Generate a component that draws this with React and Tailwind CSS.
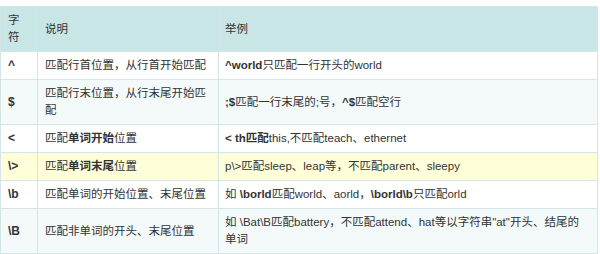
const rows = [
  {
    ch: '^',
    desc: <>匹配行首位置，从行首开始匹配</>,
    ex: <><b>^world</b>只匹配一行开头的world</>,
    bg: 'bg-white',
  },
  {
    ch: '$',
    desc: <>匹配行末位置，从行末尾开始匹配</>,
    ex: <><b>;$</b>匹配一行末尾的;号，<b>^$</b>匹配空行</>,
    bg: 'bg-[#f4fafa]',
  },
  {
    ch: '<',
    desc: <>匹配<b>单词开始</b>位置</>,
    ex: <><b>&lt; th匹配</b>this,不匹配teach、ethernet</>,
    bg: 'bg-white',
  },
  {
    ch: '\\>',
    desc: <>匹配<b>单词末尾</b>位置</>,
    ex: <>p\&gt;匹配sleep、leap等，不匹配parent、sleepy</>,
    bg: 'bg-[#ffffd9]',
  },
  {
    ch: '\\b',
    desc: <>匹配单词的开始位置、末尾位置</>,
    ex: <>如 <b>\borld</b>匹配world、aorld，<b>\borld\b</b>只匹配orld</>,
    bg: 'bg-white',
  },
  {
    ch: '\\B',
    desc: <>匹配非单词的开头、末尾位置</>,
    ex: <>如 \Bat\B匹配battery，不匹配attend、hat等以字符串"at"开头、结尾的<span className="whitespace-nowrap">单词</span></>,
    bg: 'bg-[#f4fafa]',
  },
];

export default function App() {
  return (
    <div className="w-[600px] h-[254px] bg-white pt-[6px] text-[#333] text-[11.5px] leading-[17px]" style={{ fontFamily: '"Liberation Sans", "Noto Sans CJK SC", sans-serif' }}>
      <table className="w-[597px] table-fixed border-collapse border border-[#d4e6e6]">
        <colgroup>
          <col className="w-[37px]" />
          <col className="w-[181px]" />
          <col className="w-[379px]" />
        </colgroup>
        <thead>
          <tr className="bg-[#c9e6e7]">
            <th className="border border-[#d4e6e6] px-[7px] py-[5px] text-left font-normal">字符</th>
            <th className="border border-[#d4e6e6] px-[7px] py-[5px] text-left font-normal">说明</th>
            <th className="border border-[#d4e6e6] px-[6px] py-[5px] text-left font-normal">举例</th>
          </tr>
        </thead>
        <tbody>
          {rows.map((r, i) => (
            <tr key={i} className={r.bg}>
              <td className="border border-[#d4e6e6] px-[7px] py-[5px] text-[12px] font-bold align-middle">{r.ch}</td>
              <td className="border border-[#d4e6e6] px-[7px] py-[5px] align-middle">{r.desc}</td>
              <td className="border border-[#d4e6e6] px-[6px] py-[5px] align-middle">{r.ex}</td>
            </tr>
          ))}
        </tbody>
      </table>
    </div>
  );
}
